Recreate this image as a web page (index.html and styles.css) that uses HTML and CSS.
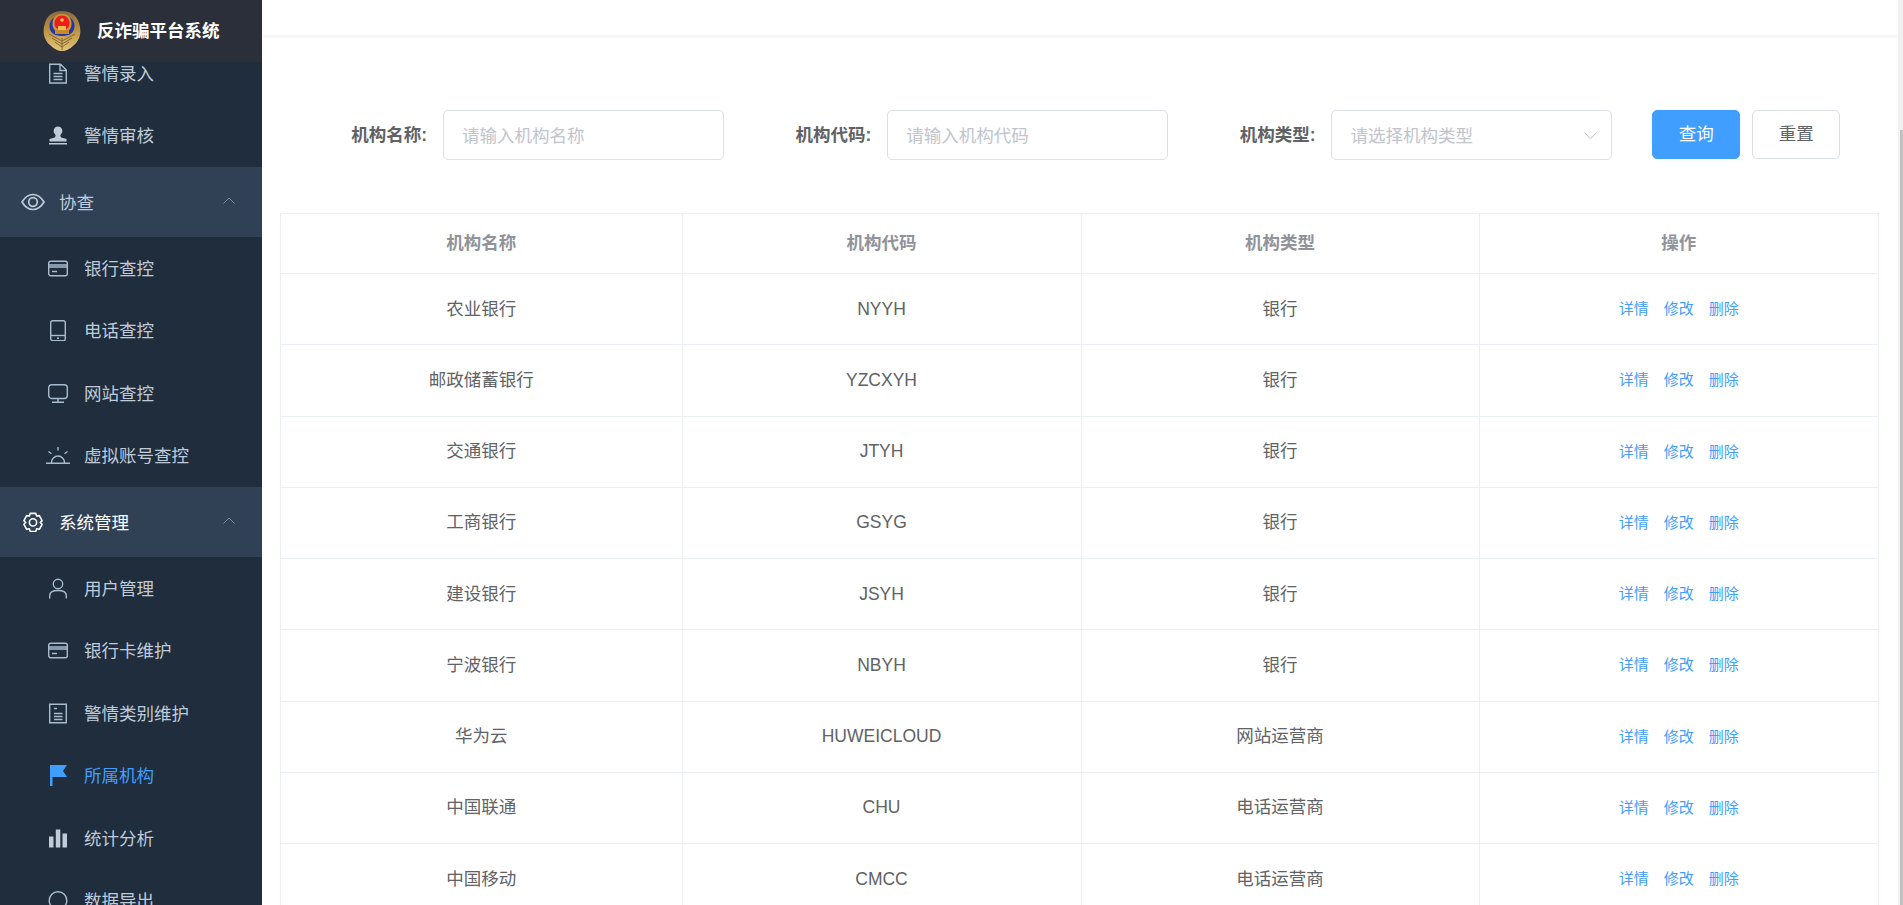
FILE: index.html
```html
<!DOCTYPE html>
<html lang="zh-CN">
<head>
<meta charset="utf-8">
<title>反诈骗平台系统</title>
<link rel="stylesheet" href="styles.css">
</head>
<body>
<div class="app">
  <aside class="sidebar">
    <div class="brand">
      <svg class="brand-logo" viewBox="0 0 38 40">
        <defs>
          <linearGradient id="gold" x1="0" y1="0" x2="0" y2="1"><stop offset="0" stop-color="#8a6b40"/><stop offset=".45" stop-color="#b8913f"/><stop offset="1" stop-color="#e3c578"/></linearGradient>
        </defs>
        <path d="M19 0C11 0 4 4 2 12-1 21 1 29 7 34c4 4 8 6 12 6s8-2 12-6c6-5 8-13 5-22C34 4 27 0 19 0z" fill="url(#gold)"/>
        <path d="M19 27v12M19 36l-7-5M19 36l7-5M19 33l-10-6M19 33l10-6M19 30l-13-7M19 30l13-7" stroke="#7d6030" stroke-width=".9" fill="none"/>
        <path d="M19 5C11 5 6.500 9 6.500 15c0 6 4 10 12.500 10s12.500-4 12.500-10C31.500 9 27 5 19 5z" fill="#2436a8"/>
        <path d="M19 3c-6 0-9.500 4-9.500 10 0 5 3.500 9 9.500 9s9.500-4 9.500-9c0-6-3.500-10-9.500-10z" fill="#c89a3e"/>
        <path d="M19 4.500c-4.500 0-7.500 3.500-7.500 8 0 4 3 6.500 7.500 6.500s7.500-2.500 7.500-6.500c0-4.500-3-8-7.500-8z" fill="#ee1c1c"/>
        <path d="M12 19h14v4H12z" fill="#c9892b"/>
        <path d="M15 15h8v4h-8z" fill="#ecc04c"/>
        <circle cx="19" cy="9" r="1.800" fill="#f6d04d"/>
      </svg>
      <span class="brand-title">反诈骗平台系统</span>
    </div>
    <nav class="menu">
      <a class="sub"><svg class="ico" viewBox="-3 -.5 24 21"><path d="M.7.700h10.800l5.800 5.800v13H.7zM11 1v6h6M4.500 10h9M4.500 13h9M4.500 16h9"/></svg><span>警情录入</span></a>
      <a class="sub"><svg class="ico" viewBox="-3 -1.500 24 21"><path class="fill" d="M9 0a4.500 4.500 0 0 1 3 7.800c-.8.700-.8 2.500.3 3.200l5.200 1.500V15H.5v-2.500L5.700 11c1.100-.7 1.100-2.500.3-3.200A4.500 4.500 0 0 1 9 0zM0 16.500h18V18H0z"/></svg><span>警情审核</span></a>
      <div class="group"><svg class="gico" viewBox="0 0 24 18"><path d="M1 9C4 4 8 1.500 12 1.500S20 4 23 9c-3 5-7 7.500-11 7.500S4 14 1 9z"/><circle cx="12" cy="9" r="4.300"/></svg><span>协查</span><svg class="chev" viewBox="0 0 12 7"><path d="M.5 6.500 6 1l5.500 5.500"/></svg></div>
      <a class="sub"><svg class="ico" viewBox="-2 -2.500 24 21"><rect x=".7" y=".7" width="18.600" height="14.600" rx="2"/><path d="M1 4.500h18M1 6.500h18M4 11h5"/></svg><span>银行查控</span></a>
      <a class="sub"><svg class="ico" viewBox="-4 0 24 21"><rect x=".7" y=".7" width="14.600" height="20" rx="2"/><path d="M1 15.500h14"/><circle class="fill" cx="8" cy="18.200" r="1"/></svg><span>电话查控</span></a>
      <a class="sub"><svg class="ico" viewBox="-2 -1 24 21"><rect x=".7" y=".7" width="18.600" height="13.800" rx="3"/><path d="M10 14.500v3.800M4 18.300h12"/></svg><span>网站查控</span></a>
      <a class="sub"><svg class="ico" viewBox="0 -2 24 21"><path d="M0 16.300h24M5.500 15.500a6.500 6.500 0 0 1 13 0M12 0v3.500M2.500 4.500l3 2.200M21.500 4.500l-3 2.200"/></svg><span>虚拟账号查控</span></a>
      <div class="group on"><svg class="gico" viewBox="0 0 22 22"><path d="M8 1.500h6l1 3 3-.5 3 5.500-2 2 2 2-3 5.500-3-.5-1 3H8l-1-3-3 .5-3-5.500 2-2-2-2L4 4l3 .5z" stroke-linejoin="round"/><circle cx="11" cy="11.500" r="4"/></svg><span>系统管理</span><svg class="chev" viewBox="0 0 12 7"><path d="M.5 6.500 6 1l5.500 5.500"/></svg></div>
      <a class="sub"><svg class="ico" viewBox="-3 -.5 24 21"><circle cx="9" cy="5.500" r="4.700"/><path d="M.7 20v-3c0-3 3-5 8.300-5s8.300 2 8.300 5v3"/></svg><span>用户管理</span></a>
      <a class="sub"><svg class="ico" viewBox="-2 -2.500 24 21"><rect x=".7" y=".7" width="18.600" height="14.600" rx="2"/><path d="M1 4.500h18M1 6.500h18M4 11h5"/></svg><span>银行卡维护</span></a>
      <a class="sub"><svg class="ico" viewBox="-3 -.5 24 21"><path d="M.7.700h16.600v18.600H.7zM5 5h3M5 10h8.500M5 13h8.500M5 16h8.500"/></svg><span>警情类别维护</span></a>
      <a class="sub active"><svg class="ico" viewBox="-4 0 24 21"><path class="fill" d="M0 0h2.500v21H0zM2.500 0H17l-4 6 4 6H2.500z"/></svg><span>所属机构</span></a>
      <a class="sub"><svg class="ico" viewBox="-3 -1.500 24 21"><path class="fill" d="M0 7h4.500v11H0zM6.800 0h4.500v18H6.800zM13.500 4H18v14h-4.500z"/></svg><span>统计分析</span></a>
      <a class="sub"><svg class="ico" viewBox="-3 -.5 24 21"><circle cx="9" cy="10" r="8.800"/></svg><span>数据导出</span></a>
    </nav>
  </aside>
  <main class="main">
    <header class="topbar"></header>
    <form class="filters">
      <div class="field"><label>机构名称:</label><div class="control placeholder">请输入机构名称</div></div>
      <div class="field"><label>机构代码:</label><div class="control placeholder">请输入机构代码</div></div>
      <div class="field"><label>机构类型:</label><div class="control placeholder select">请选择机构类型<svg class="caret" viewBox="0 0 13 8"><path d="M.5.500 6.500 7l6-6.500"/></svg></div></div>
      <button type="button" class="btn primary">查询</button>
      <button type="button" class="btn">重置</button>
    </form>
    <table class="grid">
      <thead><tr><th>机构名称</th><th>机构代码</th><th>机构类型</th><th>操作</th></tr></thead>
      <tbody>
        <tr><td>农业银行</td><td>NYYH</td><td>银行</td><td class="ops"><a>详情</a><a>修改</a><a>删除</a></td></tr>
        <tr><td>邮政储蓄银行</td><td>YZCXYH</td><td>银行</td><td class="ops"><a>详情</a><a>修改</a><a>删除</a></td></tr>
        <tr><td>交通银行</td><td>JTYH</td><td>银行</td><td class="ops"><a>详情</a><a>修改</a><a>删除</a></td></tr>
        <tr><td>工商银行</td><td>GSYG</td><td>银行</td><td class="ops"><a>详情</a><a>修改</a><a>删除</a></td></tr>
        <tr><td>建设银行</td><td>JSYH</td><td>银行</td><td class="ops"><a>详情</a><a>修改</a><a>删除</a></td></tr>
        <tr><td>宁波银行</td><td>NBYH</td><td>银行</td><td class="ops"><a>详情</a><a>修改</a><a>删除</a></td></tr>
        <tr><td>华为云</td><td>HUWEICLOUD</td><td>网站运营商</td><td class="ops"><a>详情</a><a>修改</a><a>删除</a></td></tr>
        <tr><td>中国联通</td><td>CHU</td><td>电话运营商</td><td class="ops"><a>详情</a><a>修改</a><a>删除</a></td></tr>
        <tr><td>中国移动</td><td>CMCC</td><td>电话运营商</td><td class="ops"><a>详情</a><a>修改</a><a>删除</a></td></tr>
      </tbody>
    </table>
  </main>
  <div class="scrollbar"><div class="thumb"></div></div>
</div>
</body>
</html>
```
FILE: styles.css
```css
* { box-sizing: border-box; }
html, body { margin: 0; height: 100%; overflow: hidden; background: #fff; }
body { font: 17.5px/1.2 "Liberation Sans", "Noto Sans CJK SC", sans-serif; color: #606266; }

.app { display: flex; height: 905px; overflow: hidden; }

/* Sidebar */
.sidebar { position: relative; flex: 0 0 262px; height: 905px; background: #1f2d3d; overflow: hidden; color: #bfcbd9; }
.brand { position: absolute; top: 0; left: 0; right: 0; z-index: 2; height: 62px; display: flex; align-items: center; gap: 16px; padding-left: 43px; background: #2b2f3a; }
.brand-logo { width: 38px; height: 40px; flex: none; }
.brand-title { color: #fff; font-weight: 700; }
.menu { margin-top: 42px; }
.menu span { margin-top: 2px; }
.sub { display: flex; align-items: center; height: 62.5px; padding-left: 46px; }
.ico { width: 24px; height: 21px; margin-right: 14px; flex: none; fill: none; stroke: #a9bccd; stroke-width: 1.4; }
.ico .fill { fill: #bfcbd9; stroke: none; }
.sub.active { color: #409eff; }
.sub.active .fill { fill: #409eff; }
.group { display: flex; align-items: center; height: 70px; padding-left: 21px; background: #304156; }
.gico { width: 24px; height: 20px; margin-right: 14px; flex: none; fill: none; stroke: currentColor; stroke-width: 1.7; }
.group.on { color: #fff; }
.chev { width: 12px; height: 7px; margin-left: auto; margin-right: 27px; margin-top: -4px; fill: none; stroke: #7d8a99; stroke-width: 1; }

/* Main */
.main { flex: 1; min-width: 0; overflow: hidden; padding: 0 20px 0 18px; }
.topbar { height: 35px; margin: 0 -20px 0 -18px; background: #fff; box-shadow: 0 1px 5px rgba(0, 21, 41, .08); }

.filters { display: flex; align-items: flex-start; margin: 75px 0 53px; padding-left: 37.5px; }
.field { display: flex; align-items: center; margin-right: 38px; }
.field:nth-child(3) { margin-right: 40px; }
.field label { width: 125px; padding-right: 15.500px; text-align: right; font-weight: 700; }
.control { display: flex; align-items: center; width: 281.25px; height: 50px; padding: 2px 19px 0 18.500px; border: 1px solid #dcdfe6; border-radius: 5px; background: #fff; }
.placeholder { color: #c0c4cc; }
.select { justify-content: space-between; padding-right: 14px; }
.caret { width: 13px; height: 8px; fill: none; stroke: #c0c4cc; stroke-width: 1; }
.btn { width: 88px; height: 49px; padding: 0; border: 1px solid #dcdfe6; border-radius: 5px; background: #fff; color: #606266; font: inherit; }
.btn + .btn { margin-left: 12px; }
.btn.primary { background: #409eff; border-color: #409eff; color: #fff; }

/* Table */
.grid { width: 1599px; border-collapse: collapse; table-layout: fixed; }
.grid th, .grid td { border: 1px solid #ebeef5; text-align: center; padding: 0; }
.grid th { height: 60px; color: #909399; font-weight: 700; }
.grid th:nth-child(1) { width: 401.5px; }
.grid th:nth-child(2) { width: 399px; }
.grid th:nth-child(3) { width: 398px; }
.grid td { height: 71.25px; }
.grid td.ops { font-size: 15px; }
.ops a { color: #409eff; margin: 0 7.5px; }

/* Page scrollbar */
.scrollbar { flex: 0 0 5px; height: 905px; background: #f1f1f1; }
.thumb { width: 3px; height: 775px; margin: 130px 0 0 2px; background: #c1c1c1; }
```
